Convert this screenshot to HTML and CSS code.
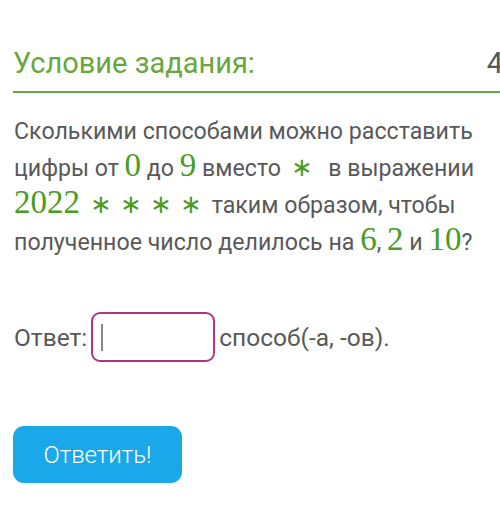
FILE: index.html
```html
<!DOCTYPE html>
<html lang="ru">
<head>
<meta charset="utf-8">
<link rel="stylesheet" href="styles.css">
</head>
<body>
<div class="page">
  <div class="head">
    <h1 class="title">Условие задания:</h1>
    <span class="num">4</span>
  </div>
  <p class="task">Сколькими способами можно расставить цифры от <span class="m">0</span> до <span class="m">9</span> вместо <span class="ast">∗</span>&nbsp; в выражении <span class="m">2022</span><span class="ast first">∗</span><span class="ast">∗</span><span class="ast">∗</span><span class="ast">∗</span> таким образом, чтобы полученное число делилось на <span class="m">6</span>, <span class="m">2</span> и <span class="m">10</span>?</p>
  <div class="answer">
    <span class="label">Ответ:</span>
    <div class="field"><span class="caret"></span></div>
    <span class="label">способ(-а, -ов).</span>
  </div>
  <button class="submit">Ответить!</button>
</div>
</body>
</html>
```

FILE: styles.css
```css
html, body {
  margin: 0;
  padding: 0;
  background: #ffffff;
  overflow: hidden;
}
.page {
  width: 500px;
  height: 530px;
  overflow: hidden;
  font-family: Roboto, "Liberation Sans", sans-serif;
  color: #595959;
}
.head {
  display: flex;
  justify-content: space-between;
  align-items: baseline;
  margin: 0 -3px 0 13px;
  padding-top: 47px;
  padding-bottom: 12px;
  border-bottom: 2px solid #6ba444;
}
.title {
  margin: 0;
  font-weight: 400;
  font-size: 29px;
  line-height: 32px;
  color: #6aa63e;
}
.num {
  font-size: 29px;
  line-height: 32px;
  color: #555;
}
.task {
  margin: 20px 14px 0 14px;
  font-size: 23.2px;
  line-height: 37px;
}
.m {
  font-family: "Liberation Serif", "DejaVu Serif", serif;
  font-size: 33px;
  line-height: 28px;
  color: #4a9c24;
}
.ast {
  color: #4a9c24;
  font-size: 26px;
  line-height: 28px;
  margin: 0 4px;
}
.ast.first {
  margin-left: 10px;
}
.answer {
  display: flex;
  align-items: center;
  gap: 4px;
  margin: 51px 0 0 14px;
}
.label {
  font-size: 24.5px;
}
.field {
  display: flex;
  align-items: center;
  box-sizing: border-box;
  width: 124px;
  height: 50px;
  padding-left: 8px;
  border: 2px solid #b03484;
  border-radius: 9px;
}
.caret {
  width: 2px;
  height: 27px;
  background: #888;
}
.submit {
  display: block;
  margin: 64px 0 0 13px;
  width: 169px;
  height: 57px;
  border: none;
  border-radius: 11px;
  background: #1ba8ea;
  color: #ffffff;
  font-family: Roboto, "Liberation Sans", sans-serif;
  font-weight: 300;
  font-size: 24px;
  padding: 0;
}
```
